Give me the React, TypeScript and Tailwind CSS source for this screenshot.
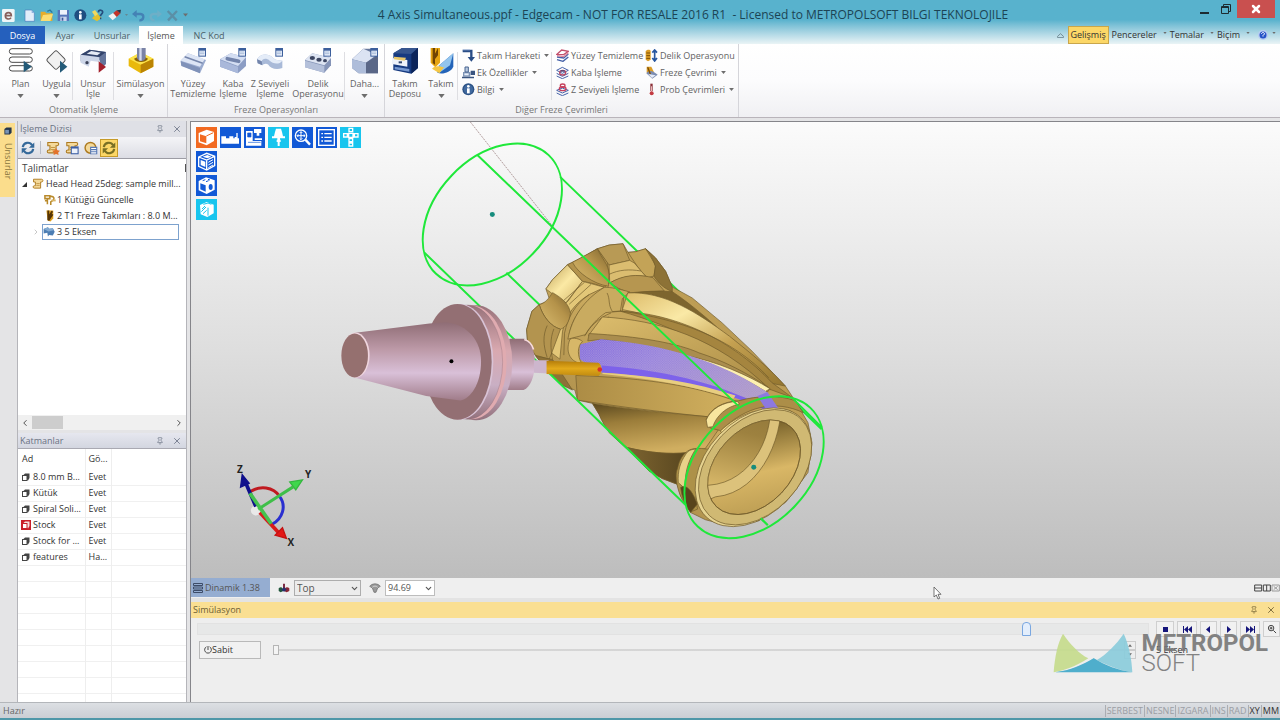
import type { ReactNode } from 'react'
import { useState } from 'react'
import { clsx } from 'clsx'
import { X, Pin, ChevronLeft, ChevronRight, ChevronDown } from 'lucide-react'

interface BigButtonProps {
  label: string
  second?: string
  arrow?: boolean
  width: string
  icon: ReactNode
}

function Big({ children }: { children: ReactNode }) {
  return (
    <svg viewBox="0 0 78 78" className="h-[26px] w-[26px] shrink-0" aria-hidden="true">
      {children}
    </svg>
  )
}

function Small({ children, size = 'h-[13px] w-[13px]' }: { children: ReactNode; size?: string }) {
  return (
    <svg viewBox="0 0 39 39" className={clsx(size, 'shrink-0')} aria-hidden="true">
      {children}
    </svg>
  )
}

function Caret({ className }: { className?: string }) {
  return (
    <svg viewBox="0 0 8 5" className={clsx('shrink-0 fill-[#6d6d6d]', className)} aria-hidden="true">
      <path d="M0 0h8L4 5z" />
    </svg>
  )
}

function BigButton({ label, second, arrow, width, icon }: BigButtonProps) {
  return (
    <button type="button" className={clsx('flex flex-col items-center pt-1 whitespace-nowrap', width)}>
      {icon}
      <span className="mt-[5px] leading-[10px]">{label}</span>
      {second && <span className="leading-[10px]">{second}</span>}
      {arrow && <Caret className="mt-[5px] h-1 w-[7px]" />}
    </button>
  )
}

function SmallButton({ label, icon, arrow }: { label: string; icon: ReactNode; arrow?: boolean }) {
  return (
    <button type="button" className="flex h-[17px] items-center gap-[2px] whitespace-nowrap">
      {icon}
      <span>{label}</span>
      {arrow && <Caret className="ml-[2px] h-[3px] w-[5px]" />}
    </button>
  )
}

function Separator() {
  return <div className="mt-2 h-12 w-px shrink-0 bg-[#dedee2]" />
}

function Group({ title, children }: { title: string; children: ReactNode }) {
  return (
    <section className="flex flex-col border-r border-[#d5d5da]">
      <div className="flex h-[59px]">{children}</div>
      <h2 className="text-center leading-[13px] text-[#777]">{title}</h2>
    </section>
  )
}

// little "document" badge shared by the milling icons
function Badge({ x = 60, y = 0 }: { x?: number; y?: number }) {
  return (
    <g transform={`translate(${x} ${y})`}>
      <rect x="0" y="0" width="23" height="26" fill="#3c5f9c" />
      <path d="M3 8h17v15H3z" fill="#e8effa" />
      <path d="M5 12h13M5 17h13" stroke="#8ea6cc" strokeWidth="2" />
    </g>
  )
}

/* ---------- ribbon icons ---------- */

const planIcon = (
  <Big>
    <g fill="#fff" stroke="#4b4b4b" strokeWidth="3">
      <rect x="4" y="2" width="69" height="16" rx="8" />
      <rect x="4" y="27" width="69" height="16" rx="8" />
      <rect x="4" y="53" width="69" height="16" rx="8" />
    </g>
    <path d="M47 38v35l24-17z" fill="#235a78" />
  </Big>
)

const applyIcon = (
  <Big>
    <rect x="15" y="15" width="42" height="42" rx="6" transform="rotate(45 36 36)" fill="#f1f1f1" stroke="#555" strokeWidth="3" />
    <path d="M48 38v36l22-18z" fill="#235a78" />
  </Big>
)

const featureIcon = (
  <Big>
    <path d="M2 20 28 5l50 7v36l-12 12-8-24-30-2-8 18-18-12z" fill="#64759b" />
    <path d="m2 20 26-15 50 7-20 15z" fill="#33446b" />
    <path d="m20 17 14-8 28 5-10 8z" fill="#e6ebf5" />
    <path d="m2 20 56 8v14l-26-4-6 18L2 44z" fill="#cdd6e8" />
    <circle cx="21" cy="44" r="5" fill="#3b4258" />
    <path d="M56 40v34l22-17z" fill="#a3202c" />
  </Big>
)

const simIcon = (
  <Big>
    <path d="M2 32 38 14l38 18v24L38 76 2 54z" fill="#e9b90b" />
    <path d="m2 32 36 18 38-18-38-20z" fill="#fce34a" />
    <path d="m38 50 38-18v24L38 76z" fill="#bb8404" />
    <path d="M18 32c6 12 34 14 42 0L40 22z" fill="#876107" />
    <path d="M27 0h26v30c-4 12-22 12-26 0z" fill="#7a83a6" />
    <path d="M34 0h7v38h-7z" fill="#d5daec" />
  </Big>
)

const faceIcon = (
  <Big>
    <path d="M2 38 24 16l54 20-18 40L4 52z" fill="#9aabcf" />
    <path d="m2 38 22-22 50 18-14 22z" fill="#dde5f5" />
    <path d="m14 26 54 20" stroke="#7787ac" strokeWidth="5" />
    <path d="m2 40 58 20v16L4 54z" fill="#8092b9" />
    <Badge x={55} />
  </Big>
)

const roughIcon = (
  <Big>
    <path d="m0 34 32-18 46 12v26L54 76 0 56z" fill="#8c9dc4" />
    <path d="m0 34 32-18 46 12-24 26z" fill="#d4def2" />
    <path d="m22 32 34 8" stroke="#7384ab" strokeWidth="11" strokeLinecap="round" />
    <path d="m0 36 54 20v20L0 56z" fill="#a9b8da" />
    <Badge x={55} />
  </Big>
)

const zLevelIcon = (
  <Big>
    <path d="M0 34c8-16 32-20 46-6 6 6 12 10 30 10v22c-20 8-36 0-42-10-6-6-16-2-18 2L2 46z" fill="#a9bad8" />
    <path d="M0 34c8-16 32-20 46-6 6 6 12 10 30 10-10 14-30 8-38 0-8-8-22-8-24 2z" fill="#e4ecf8" />
    <path d="M2 46 0 34l14 6 2 12z" fill="#7385ab" />
    <Badge x={55} />
  </Big>
)

const holeIcon = (
  <Big>
    <path d="m0 36 22-20 56 14v22L58 74 0 58z" fill="#8695b8" />
    <path d="m0 36 22-20 56 14-20 22z" fill="#dde4f2" />
    <ellipse cx="22" cy="30" rx="8" ry="6" fill="#3d4763" />
    <ellipse cx="42" cy="35" rx="8" ry="6" fill="#3d4763" />
    <ellipse cx="60" cy="38" rx="6" ry="5" fill="#3d4763" />
    <path d="m0 38 58 16v20L0 58z" fill="#b4c0da" />
    <Badge x={55} />
  </Big>
)

const moreIcon = (
  <Big>
    <path d="M0 34 34 2h44v74H20L0 60z" fill="#67789c" />
    <path d="M0 34 34 2l40 18-32 24z" fill="#dbe3f3" />
    <path d="m0 34 42 10v32H20L0 60z" fill="#aebdda" />
    <path d="m42 44 36-22v54H42z" fill="#5a6787" />
    <Badge x={55} />
  </Big>
)

const storeIcon = (
  <Big>
    <path d="M4 16 30 0h48v60L58 77 4 66z" fill="#163a80" />
    <path d="M4 16 30 0h48L58 18z" fill="#35558e" />
    <path d="m58 18 20-18v60L58 77z" fill="#0c2459" />
    <path d="m0 30 46 6v20L0 48z" fill="#eef2fa" />
    <path d="m6 26 36 3-4 9-32-4z" fill="#e9c869" />
    <path d="m8 56 44 7v8L8 64z" fill="#7698d0" />
    <path d="M20 40h10v6H20z" fill="#34476f" />
  </Big>
)

const toolIcon = (
  <Big>
    <path d="M8 0h28v44L22 58 8 44z" fill="#e6a512" />
    <path d="M14 0h7v50l-7-5zM30 0v22L14 42V30z" fill="#6f4303" />
    <path d="m34 52 42-36v40c-8 18-34 24-48 18z" fill="#2464b9" />
    <path d="m34 52 42-36-10 36-32 22z" fill="#93c5ee" />
    <path d="M12 62c10-10 20-8 36-4L34 76z" fill="#f5c744" />
  </Big>
)

const moveIcon = (
  <Small>
    <path d="M2 6h26v22" fill="none" stroke="#2a4d86" strokeWidth="7" />
    <path d="M17 24h22L28 38z" fill="#2a4d86" />
    <path d="M2 3h22" stroke="#8aa8d4" strokeWidth="2" />
  </Small>
)

const extrasIcon = (
  <Small>
    <path d="M3 18h22v14H3z" fill="#7d93b5" />
    <path d="M9 3h10v15H9z" fill="#b9c9e0" stroke="#496590" strokeWidth="3" />
    <path d="M0 32h36v5H0zM26 14h13v13H26z" fill="#3b5580" />
    <path d="M7 22h13v6H7z" fill="#e8effa" />
  </Small>
)

const infoIcon = (
  <Small>
    <circle cx="19" cy="19" r="18" fill="#2c5285" />
    <circle cx="19" cy="19" r="14" fill="#41699f" />
    <path d="M15 16h8v15h-8z" fill="#fff" />
    <circle cx="19" cy="10" r="4" fill="#fff" />
  </Small>
)

const faceSmall = (
  <Small>
    <g fill="none" strokeWidth="4">
      <path d="m3 16 14-13 20 4-14 10z" stroke="#c3506c" />
      <path d="m3 24 20 3 14-12M3 32l18 5 16-13" stroke="#4561a8" />
      <path d="m3 20 20 3 14-12" stroke="#df8398" />
    </g>
  </Small>
)

const roughSmall = (
  <Small>
    <g fill="none" stroke="#4561a8" strokeWidth="3">
      <path d="m2 13 17-9 18 9-18 9zM2 22l17 9 18-9M2 30l17 8 18-8" />
    </g>
    <ellipse cx="20" cy="20" rx="9" ry="7" fill="none" stroke="#b74663" strokeWidth="4" />
    <path d="M14 15h12" stroke="#3a467c" strokeWidth="4" />
  </Small>
)

const zSmall = (
  <Small>
    <g fill="none" stroke="#4561a8" strokeWidth="3">
      <path d="m2 22 17-7 18 7-18 8zM2 30l17 8 18-8" />
    </g>
    <g fill="none" stroke="#c6405d" strokeWidth="4">
      <ellipse cx="20" cy="8" rx="7" ry="5" />
      <ellipse cx="20" cy="17" rx="10" ry="6" />
    </g>
  </Small>
)

const holeSmall = (
  <Small>
    <path d="M2 6c6-6 14-4 15 0v26l-8 5-7-5z" fill="#dc9d25" />
    <path d="M4 12h11M4 20h11M4 28h11" stroke="#7a4c05" strokeWidth="3" />
    <path d="M29 3v32M22 11l7-8 7 8M22 27l7 9 7-9" fill="none" stroke="#2857a0" strokeWidth="5" />
  </Small>
)

const millSmall = (
  <Small>
    <path d="M5 2h14l8 17-8 12L5 20z" fill="#dc9d25" />
    <path d="M4 22c8-12 20-8 34 4L22 38z" fill="#7c8db2" />
    <path d="m10 24 22 4-11 8z" fill="#e5ebf7" />
    <path d="m8 4 8 20" stroke="#7a4c05" strokeWidth="4" />
  </Small>
)

const probeSmall = (
  <Small>
    <path d="M16 2h7v22h-7z" fill="#8b2f36" />
    <path d="M18 10h3v16h-3z" fill="#e9b6b7" />
    <circle cx="20" cy="31" r="6" fill="#c33b42" />
  </Small>
)

/* ---------- title bar ---------- */

function QuickAccess() {
  const items: { name: string; art: ReactNode }[] = [
    {
      name: 'Edgecam',
      art: (
        <>
          <rect width="38" height="39" rx="4" fill="#eef6f8" />
          <path d="M10 20h18c0-12-17-12-18 0 0 12 14 12 17 6" fill="none" stroke="#87605c" strokeWidth="5" />
        </>
      ),
    },
    {
      name: 'Yeni',
      art: (
        <>
          <path d="M6 3h20l8 9v25H6z" fill="#e2edfa" stroke="#4d7dbd" strokeWidth="2" />
          <path d="M26 3v9h8z" fill="#8fb3e0" />
        </>
      ),
    },
    {
      name: 'Aç',
      art: (
        <>
          <path d="M2 8h13l4 5h18v23H2z" fill="#e5ad2c" />
          <path d="m9 18 30-3-8 21H2z" fill="#fbdd73" />
          <path d="m22 7 8-4 7 8" fill="none" stroke="#2a7a9c" strokeWidth="4" />
        </>
      ),
    },
    {
      name: 'Kaydet',
      art: (
        <>
          <path d="M2 3h34v33H2z" fill="#5676ba" />
          <path d="M9 3h21v14H9z" fill="#edf2fb" />
          <path d="M10 23h19v13H10z" fill="#c7d4ec" />
          <path d="M14 26h5v9h-5z" fill="#3a569a" />
        </>
      ),
    },
    {
      name: 'Bilgi',
      art: (
        <>
          <circle cx="19" cy="19" r="18" fill="#1f4f80" />
          <path d="M15 16h8v15h-8z" fill="#fff" />
          <circle cx="19" cy="10" r="4" fill="#fff" />
        </>
      ),
    },
    {
      name: 'Yardım',
      art: (
        <>
          <path d="m3 28 15-15 14 14-14 10z" fill="#e2c12e" />
          <path d="m3 8 9-5 9 12-9 7z" fill="#efd960" />
          <path d="M22 10c1-9 14-8 13 0-1 5-7 6-7 12M27 28h4" fill="none" stroke="#254d7d" strokeWidth="5" />
        </>
      ),
    },
    {
      name: 'Temizle',
      art: (
        <>
          <path d="m1 21 14-9 13 10-14 12z" fill="#f2f2f2" />
          <path d="M16 12 26 4l12 8-12 12z" fill="#c33329" />
          <path d="m26 4 13-2-2 11z" fill="#2f3446" />
        </>
      ),
    },
  ]
  return (
    <div className="flex w-48 shrink-0 items-center gap-1 pt-[2px] pl-[2px]">
      {items.map((item, index) => (
        <button key={item.name} type="button" aria-label={item.name} className={clsx(index === 1 && 'ml-1')}>
          <Small>{item.art}</Small>
        </button>
      ))}
      <Caret className="h-[2px] w-[3px] opacity-60" />
      <button type="button" aria-label="Geri al">
        <Small>
          <path d="M8 15h18c12 2 10 20-4 19" fill="none" stroke="#4482b5" strokeWidth="7" />
          <path d="M14 3v23L0 15z" fill="#4482b5" />
        </Small>
      </button>
      <button type="button" aria-label="Yinele">
        <Small>
          <path d="M31 15H13C1 17 3 35 17 34" fill="none" stroke="#6eafc7" strokeWidth="7" />
          <path d="M25 3v23l14-11z" fill="#6eafc7" />
        </Small>
      </button>
      <button type="button" aria-label="Sil">
        <Small>
          <path d="m5 6 27 28M33 6 6 34" stroke="#5b8fa6" strokeWidth="7" />
        </Small>
      </button>
      <Caret className="h-1 w-[5px]" />
    </div>
  )
}

function TitleBar() {
  return (
    <div className="flex h-7 items-stretch">
      <QuickAccess />
      <h1 className="min-w-0 flex-1 truncate pt-[6px] text-center text-[12px] leading-[18px] whitespace-pre text-[#1c4454]">
        {'4 Axis Simultaneous.ppf - Edgecam - NOT FOR RESALE 2016 R1  - Licensed to METROPOLSOFT BILGI TEKNOLOJILE'}
      </h1>
      <div className="flex w-[86px] shrink-0 items-start justify-end pr-[5px]">
        <button type="button" aria-label="Küçült" className="flex h-[14px] w-[22px] items-end justify-center">
          <span className="h-[2px] w-[9px] bg-[#1d2b31]" />
        </button>
        <button type="button" aria-label="Önceki boyut" className="flex h-[14px] w-[22px] items-end justify-center">
          <svg viewBox="0 0 10 10" className="h-[10px] w-[10px]" fill="none" stroke="#1d2b31">
            <path d="M2.5 2V.5h7v7H8" />
            <path d="M.5 2.500h7v7h-7zM.5 3.500h7" />
          </svg>
        </button>
        <button type="button" aria-label="Kapat" className="flex h-[18px] w-[39px] items-center justify-center bg-[#c9504f] text-white">
          <X className="h-3 w-3" strokeWidth={5} />
        </button>
      </div>
    </div>
  )
}

const tabs = [
  { label: 'Dosya', width: 'w-[45px]' },
  { label: 'Ayar', width: 'w-10' },
  { label: 'Unsurlar', width: 'w-[54px]' },
  { label: 'İşleme', width: 'w-11' },
  { label: 'NC Kod', width: 'w-[52px]' },
]

function TabRow() {
  const [active, setActive] = useState('İşleme')
  return (
    <div className="flex h-4 items-end justify-between">
      <nav className="flex h-[18px] items-stretch">
        {tabs.map((tab) => (
          <button
            key={tab.label}
            type="button"
            onClick={() => setActive(tab.label)}
            className={clsx(
              'text-center leading-[19px]',
              tab.width,
              tab.label === 'Dosya' && 'bg-[#2560bd] text-white',
              tab.label === active && 'bg-white text-[#555]',
              tab.label !== 'Dosya' && tab.label !== active && 'text-[#4a5f68]'
            )}
          >
            {tab.label}
          </button>
        ))}
      </nav>
      <div className="flex h-[18px] items-center text-[#333]">
        <svg viewBox="0 0 8 6" className="mr-1 h-[5px] w-[7px]" fill="none" stroke="#66808a" aria-hidden="true">
          <path d="M.5 4 4 .8 7.500 4v1.500h-7z" />
        </svg>
        <button type="button" className="h-[18px] w-[41px] border border-[#c9a64b] bg-[#fcd767] text-center">Gelişmiş</button>
        {['Pencereler', 'Temalar', 'Biçim'].map((name) => (
          <button key={name} type="button" className="flex items-center gap-[6px] pl-[3px]">
            {name}
            <Caret className="mb-1 h-[2px] w-1" />
          </button>
        ))}
        <button type="button" aria-label="Yardım" className="ml-2 flex items-center gap-1 pr-1">
          <svg viewBox="0 0 10 10" className="h-[10px] w-[10px]">
            <circle cx="5" cy="5" r="5" fill="#b8ccf3" />
            <circle cx="5" cy="5" r="3.500" fill="#2754c8" />
            <path d="M3.500 4c0-2 3-2 3 0L5 5.500v1" fill="none" stroke="#fff" />
          </svg>
          <Caret className="mb-1 h-[2px] w-1" />
        </button>
      </div>
    </div>
  )
}

function Ribbon() {
  return (
    <div className="flex h-[74px] shrink-0 border-b border-[#b9b4ba] bg-linear-to-b from-white via-[#fcfcfd] to-[#f0f0f3] text-[#636363]">
      <Group title="Otomatik İşleme">
        <BigButton width="w-[41px]" label="Plan" arrow icon={planIcon} />
        <BigButton width="w-[31px]" label="Uygula" arrow icon={applyIcon} />
        <Separator />
        <BigButton width="w-10" label="Unsur" second="İşle" icon={featureIcon} />
        <Separator />
        <BigButton width="w-[53px]" label="Simülasyon" arrow icon={simIcon} />
      </Group>
      <Group title="Freze Operasyonları">
        <BigButton width="w-[50px]" label="Yüzey" second="Temizleme" icon={faceIcon} />
        <BigButton width="w-[30px]" label="Kaba" second="İşleme" icon={roughIcon} />
        <BigButton width="w-[44px]" label="Z Seviyeli" second="İşleme" icon={zLevelIcon} />
        <BigButton width="w-[52px]" label="Delik" second="Operasyonu" icon={holeIcon} />
        <Separator />
        <BigButton width="w-[39px]" label="Daha..." arrow icon={moreIcon} />
      </Group>
      <Group title="Diğer Freze Çevrimleri">
        <BigButton width="w-10" label="Takım" second="Deposu" icon={storeIcon} />
        <BigButton width="w-8" label="Takım" arrow icon={toolIcon} />
        <Separator />
        <div className="w-[93px] pt-[3px] pl-1">
          <SmallButton label="Takım Hareketi" arrow icon={moveIcon} />
          <SmallButton label="Ek Özellikler" arrow icon={extrasIcon} />
          <SmallButton label="Bilgi" arrow icon={infoIcon} />
        </div>
        <Separator />
        <div className="w-[93px] pt-[3px] pl-1">
          <SmallButton label="Yüzey Temizleme" icon={faceSmall} />
          <SmallButton label="Kaba İşleme" icon={roughSmall} />
          <SmallButton label="Z Seviyeli İşleme" icon={zSmall} />
        </div>
        <div className="w-[93px] pt-[3px]">
          <SmallButton label="Delik Operasyonu" icon={holeSmall} />
          <SmallButton label="Freze Çevrimi" arrow icon={millSmall} />
          <SmallButton label="Prob Çevrimleri" arrow icon={probeSmall} />
        </div>
      </Group>
    </div>
  )
}

/* ---------- left panels ---------- */

function PanelTitle({ title, className }: { title: string; className?: string }) {
  return (
    <header className={clsx('flex shrink-0 items-center pl-[2px]', className)}>
      <h2 className="flex-1">{title}</h2>
      <button type="button" aria-label="Sabitle" className="mr-2">
        <Pin className="h-2 w-2" />
      </button>
      <button type="button" aria-label="Kapat" className="mr-1">
        <X className="h-[10px] w-[10px]" strokeWidth={2} />
      </button>
    </header>
  )
}

const refreshArt = (color: string) => (
  <>
    <path d="M5 17c2-14 20-16 26-5M34 22c-2 14-20 16-26 5" fill="none" stroke={color} strokeWidth="6" />
    <path d="M37 4v15H22zM2 35V20h15z" fill={color} />
  </>
)

const scrollArt = (
  <>
    <path d="M5 4h26c6 0 6 9 0 9h-3v20H8c-6 0-6-8 0-8h3V13H5z" fill="#f4d99a" stroke="#ad7a20" strokeWidth="3" />
    <path d="M14 18h11M14 24h11" stroke="#ad7a20" strokeWidth="2" />
  </>
)

function SequencePanel() {
  return (
    <section className="flex h-[309px] shrink-0 flex-col bg-white">
      <PanelTitle title="İşleme Dizisi" className="h-4 bg-[#dfe0e6] text-[#6a7284]" />
      <div className="flex h-[21px] shrink-0 items-center bg-linear-to-b from-[#f4f4f7] to-[#dcdde4] pl-[3px]">
        <button type="button" aria-label="Yenile">
          <Small size="h-[14px] w-[14px]">{refreshArt('#35699a')}</Small>
        </button>
        <div className="mx-[5px] h-[13px] w-px bg-[#b9bcc6]" />
        <div className="flex items-center gap-[5px]">
          <button type="button" aria-label="Dizi ekle">
            <Small size="h-[14px] w-[14px]">
              {scrollArt}
              <path d="m28 20 4 6 7 1-5 5 1 7-7-3-7 3 1-7-5-5 7-1z" fill="#e2722b" />
            </Small>
          </button>
          <button type="button" aria-label="Dizi özellikleri">
            <Small size="h-[14px] w-[14px]">
              {scrollArt}
              <path d="M16 15h22v22H16z" fill="#3c5fa5" />
              <path d="M19 21h16v13H19z" fill="#edf2fb" />
            </Small>
          </button>
          <button type="button" aria-label="Zaman">
            <Small size="h-[14px] w-[14px]">
              <circle cx="18" cy="19" r="15" fill="#f4d99a" stroke="#ad7a20" strokeWidth="4" />
              <path d="M17 16h20v21H17z" fill="#5678b4" />
              <path d="M20 21h14M20 27h14M20 33h14" stroke="#fff" strokeWidth="3" />
            </Small>
          </button>
        </div>
        <button type="button" aria-label="Otomatik yenile" className="ml-[2px] flex h-[18px] w-[18px] items-center justify-center border border-[#c69b2a] bg-[#fcd766]">
          <Small size="h-[14px] w-[14px]">{refreshArt('#797024')}</Small>
        </button>
      </div>
      <div className="flex h-[18px] shrink-0 items-center justify-between border-t border-[#9c9ca4] pl-1 text-[10px]">
        <span>Talimatlar</span>
        <span className="h-2 w-px bg-[#555]" />
      </div>
      <ul className="flex-1 whitespace-nowrap text-[#333]">
        <li className="flex h-4 items-center pl-1">
          <svg viewBox="0 0 5 5" className="mr-[5px] h-[5px] w-[5px]">
            <path d="M5 0v5H0z" fill="#333" />
          </svg>
          <Small size="h-3 w-3">{scrollArt}</Small>
          <span className="ml-[2px]">Head Head 25deg: sample mill...</span>
        </li>
        <li className="flex h-4 items-center gap-px pl-[26px]">
          <Small size="h-3 w-3">
            <path d="M3 6h16v9H3zM11 15v18M3 22h10M20 8c14-2 14 8 10 12l-8 6v10" fill="none" stroke="#b98a2b" strokeWidth="5" />
            <path d="M24 18h14v6H24z" fill="#d9b565" />
          </Small>
          <span>1 Kütüğü Güncelle</span>
        </li>
        <li className="flex h-4 items-center gap-px pl-[26px]">
          <Small size="h-3 w-3">
            <path d="M8 2h22v26l-9 9-9-3z" fill="#dd9e1c" />
            <path d="M14 2v22l13-20M14 34l14-20" fill="none" stroke="#553405" strokeWidth="6" />
          </Small>
          <span>2 T1 Freze Takımları : 8.0 M...</span>
        </li>
        <li className="flex h-4 items-center pr-[7px] pl-[14px]">
          <ChevronRight className="mr-[2px] h-[8px] w-[8px] text-[#aaa]" />
          <span className="flex h-4 flex-1 items-center gap-[2px] border border-[#7da2ce]">
            <Small size="h-3 w-3">
              <path d="M2 10 16 4l4 5 12-2 6 12-6 12-12-2-4 5L14 22 2 24z" fill="#4d7eb3" />
              <path d="m2 10 14-6 4 5 12-2 3 7-17 4z" fill="#83abd2" />
            </Small>
            3 5 Eksen
          </span>
        </li>
      </ul>
      <div className="flex h-[15px] shrink-0 items-center bg-[#f0f0f0] px-[2px]">
        <ChevronLeft className="h-[10px] w-[10px] text-[#333]" />
        <div className="ml-[2px] h-[13px] w-[31px] bg-[#cdcdcd]" />
        <ChevronRight className="ml-auto h-[10px] w-[10px] text-[#333]" />
      </div>
    </section>
  )
}

const layers = [
  { name: '8.0 mm B...', visible: 'Evet' },
  { name: 'Kütük', visible: 'Evet' },
  { name: 'Spiral Soli...', visible: 'Evet' },
  { name: 'Stock', visible: 'Evet', current: true },
  { name: 'Stock for ...', visible: 'Evet' },
  { name: 'features', visible: 'Ha...' },
]

function LayersPanel() {
  return (
    <section className="flex min-h-0 flex-1 flex-col bg-white">
      <PanelTitle title="Katmanlar" className="h-4 border-b border-[#a9a9b2] bg-linear-to-b from-[#e6e7ef] to-[#d3d6e0] text-[#6a7284]" />
      <div className="min-h-0 flex-1 overflow-hidden">
        <table className="w-full table-fixed border-collapse text-left text-[#333]">
          <colgroup>
            <col className="w-[67px]" />
            <col className="w-[26px]" />
            <col />
          </colgroup>
          <thead>
            <tr className="h-5">
              <th className="border-r border-[#eee] pl-[4px] font-normal">Ad</th>
              <th className="border-r border-[#eee] pl-[3px] font-normal">Gö...</th>
              <th className="font-normal" />
            </tr>
          </thead>
          <tbody>
            {layers.map((layer) => (
              <tr key={layer.name} className="h-4 border-b border-[#f0f0f0]">
                <td className="border-r border-[#eee] p-0 pl-[3px] whitespace-nowrap">
                  <span className="flex items-center gap-[2px]">
                    <svg viewBox="0 0 10 10" className={clsx('h-[10px] w-[10px] shrink-0', layer.current && 'bg-[#c9202b]')} aria-hidden="true">
                      <path d="M2 3.500 4 1.500h4.500V6L7 8.500z" fill={layer.current ? '#f6dede' : '#444'} />
                      <rect x="1.500" y="3.500" width="4.500" height="5" fill="#fff" stroke={layer.current ? '#c9202b' : '#444'} />
                    </svg>
                    {layer.name}
                  </span>
                </td>
                <td className="border-r border-[#eee] p-0 pl-[3px] whitespace-nowrap">{layer.visible}</td>
                <td />
              </tr>
            ))}
            {Array.from({ length: 9 }, (_, i) => (
              <tr key={i} className="h-4 border-b border-[#f0f0f0]">
                <td className="border-r border-[#eee]" />
                <td className="border-r border-[#eee]" />
                <td />
              </tr>
            ))}
          </tbody>
        </table>
      </div>
    </section>
  )
}

/* ---------- 3D view ---------- */

function Part() {
  return (
    <g transform="translate(520 230) scale(.33333)" stroke="#6f5a2a" strokeWidth="2" strokeLinejoin="round">
      {/* silhouette */}
      <path
        d="M22 300 38 245 60 225 92 212 80 178 100 150 145 105 188 85 235 57 270 46 312 42 327 68 350 66 380 57 410 85 440 125 460 172 520 205 610 280 700 365 800 470 830 515 868 580 880 640 868 730 800 820 720 875 630 890 560 872 515 850 485 800 475 765 430 748 390 725 330 665 270 610 240 555 220 522 175 512 167 482 125 465 90 430 50 380 25 340z"
        fill="url(#gold)"
      />
      {/* crown lobes */}
      <path d="M80 178 100 150 145 105 190 155 140 220 110 200z" fill="url(#lobe)" />
      <path d="m145 105 45-22 45-26 30 40 6 62-15 14c-35-14-50-14-66-18z" fill="#b3934c" />
      <path d="m235 57 35-11 42-4 20 50-62 14z" fill="#b89a55" />
      <path d="M235 57c14 32 34 46 35 78l-2 35c-46-8-92-40-108-72z" fill="url(#pocket)" />
      <path d="m327 68 23-2 30-9 30 50-5 32-18 5c-20-14-34-36-60-76z" fill="#c3a357" />
      <path d="m380 57 30 28 30 40 20 47v14c-26-10-42-26-55-46l4-30c-6-20-16-40-29-53z" fill="#8d7236" />
      <path d="m270 106 62-14 14 8 34 40c-40-4-70 0-108 20z" fill="#dbbd70" />
      <path d="M270 134c30-14 60-16 96-10" fill="none" />
      <path d="M272 160c40-24 80-28 130-16l34 40-104 6-34-14z" fill="#b69650" />
      <path d="m190 155 66 18-46 22c-40 24-70 60-80 110l-8 84-40-30c-10-60 20-110 64-144z" fill="#e3c778" />
      <path d="M210 195c-44 30-64 70-74 116l-2 66M228 202c-44 26-70 70-78 112M134 212l62-54M150 224l66-60M98 370c-14-60-8-80 10-92M80 350c-10-40 0-60 10-72" fill="none" />
      <path d="M60 225c18-4 30-20 40-36 28 16 50 34 54 62-4 24-12 42-30 48-30-8-54-40-64-74z" fill="url(#pocket)" />
      <path d="M22 300 38 245l22-20c10 34 34 66 64 74l-26 70-8 20-42-12-23-37z" fill="#b3944f" />
      <path d="M84 288c-14 30-12 60 0 96M104 298c-12 30-10 60-4 92" fill="none" />
      <path d="m50 380 50 10 60 92-35-17-35-35z" fill="#8d7137" />
      <path d="M256 173c20 0 40 4 76 14l-22 20-6 38-44 4c-24 16-50 44-60 66l-54 14c12-66 50-120 110-156z" fill="#c9ab60" />
      <path d="M264 190c10 20 2 34 16 56l30-2 4-40M270 262c-24 12-46 34-56 54M276 250c-40 16-66 44-80 70" fill="none" />

      {/* top flute */}
      <path d="M326 190c50-4 90-8 134-4 60 40 130 100 190 160-70-60-140-110-218-140z" fill="#7d652e" />
      <path d="M326 190c110-6 210 60 306 130 70 56 120 96 168 150l-40-8c-110-90-250-186-450-222z" fill="url(#fluteA)" />
      <path d="M304 245c160 6 330 80 456 215l60 44-66-24C640 380 470 290 304 245z" fill="#a5853f" />
      <path d="M250 262c170 10 340 60 504 218C590 396 390 326 208 318z" fill="url(#fluteB)" />
      <path d="M310 245c170 24 330 80 440 200" fill="none" />
      <path d="M210 312c150 8 270 30 330 58 70 22 150 62 214 108l-8 10c-150-80-340-144-500-158l-40 4z" fill="#aa8d4e" />
      <path d="M500 378c90 16 190 60 254 100l-14 8c-70-44-160-84-240-108z" fill="#fdf0b0" />

      {/* machined flank */}
      <path d="m182 345 64-16c150 14 330 46 500 160l34 50-42 2c-130-60-300-100-490-112l-66-40z" fill="url(#flank)" stroke="none" />
      <path d="m182 345 64-16c150 14 330 46 500 160l34 50-42 2c-130-60-300-100-490-112l-66-40z" fill="url(#mesh)" stroke="none" />
      <path d="M248 408c180 14 350 50 500 130l-10 3c-130-60-300-100-490-112z" fill="#7d62ea" stroke="none" />
      <path d="M152 330c10-8 30-2 38 6-16 14-16 44-2 66-30-2-52-30-36-72z" fill="#d7b768" />

      {/* lower flutes */}
      <path d="M170 438c220 8 360 32 484 78-40 6-70 26-88 46-120-12-270-30-391-50z" fill="url(#land)" />
      <path d="M250 430c150 8 280 30 400 68l-6 10c-130-40-260-62-394-74z" fill="#e8ce80" stroke="none" />
      <path d="M220 522c110 18 230 30 345 40l36 36-42 60-50 12c-60 6-120 0-184-15-40-26-70-60-85-100z" fill="url(#fluteC)" />
      <path d="M325 655c64 15 124 21 184 15-26 20-36 60-34 95l-45-17-40-23z" fill="url(#fluteD)" />
      <path d="M562 570c16-36 54-54 98-56 60-16 120-18 170 0l24 36C770 510 680 530 606 604l-32-8z" fill="#ac8e48" />
      <path d="M562 572c14-34 50-54 94-56l6 8c-40 8-70 36-80 68l-16 2z" fill="#f8e59e" />
      <path d="M604 606c60-58 130-76 210-62l10 8c-80-10-150 0-210 60z" fill="#f5de90" />
      <path d="M512 662c20-8 36-4 60-2-34 40-50 110-36 180l-20 8c-40-40-52-110-40-130 4-24 16-46 36-56z" fill="#ad9148" />
      <path d="M500 676c8-14 20-16 30-16-26 40-34 80-30 120l-22-20c-2-36 6-60 22-84z" fill="#e8d289" />
      <path d="M485 775c16-10 34 6 50 50l-20 25c-16-20-26-44-30-75z" fill="#58441c" />
      <path d="m742 540 38-2-34-50-30 12z" fill="#8d78e0" stroke="none" />

      {/* front ring and bore */}
      <ellipse cx="704" cy="714" rx="206" ry="142" transform="rotate(-46.500 704 714)" fill="#e6d390" />
      <ellipse cx="709" cy="714" rx="200" ry="138" transform="rotate(-46.500 709 714)" fill="#d0b973" />
      <ellipse cx="706" cy="714" rx="164" ry="113" transform="rotate(-46.500 706 714)" fill="url(#bore)" />
      <g clipPath="url(#boreClip)">
        <path d="M500 480h284c20 124-50 310-194 323l-90 37z" fill="#dcc27b" />
        <path d="M500 480h250c28 130-50 280-180 288l-70 10z" fill="url(#floor)" />
      </g>
      <ellipse cx="706" cy="714" rx="164" ry="113" transform="rotate(-46.500 706 714)" fill="none" />
    </g>
  )
}

function Holder() {
  return (
    <g transform="translate(330 290) scale(.33333)">
      <path d="M540 148h45c22 10 32 40 32 72 0 40-14 74-34 82h-50z" fill="url(#mauve)" />
      <path d="M585 150c14 4 24 16 28 30" fill="none" stroke="#f8dcdf" strokeWidth="5" />
      <path d="M614 212h44v40l-44-2z" fill="#cdb6cd" />
      <path d="M652 214 808 220c12 6 12 32 0 40l-156-6z" fill="url(#cutter)" />
      <circle cx="812" cy="240" r="7" fill="#d83227" />
      <ellipse cx="440" cy="220" rx="109" ry="173" fill="url(#flange)" />
      <ellipse cx="426" cy="219" rx="106" ry="171" fill="#e0abb0" />
      <ellipse cx="414" cy="218" rx="106" ry="172" fill="url(#flange)" stroke="#8c6a75" strokeWidth="1" />
      <ellipse cx="391" cy="217" rx="101" ry="174" fill="#d9c3d6" />
      <ellipse cx="384" cy="217" rx="103" ry="174" fill="#936f73" />
      <path d="M77 130 300 102l50-4c66 8 105 56 105 117 0 70-32 112-62 118l-103-13L77 265z" fill="url(#mauve)" />
      <ellipse cx="78" cy="197" rx="42" ry="68" fill="#f0d6df" />
      <ellipse cx="75" cy="198" rx="40" ry="66" fill="#95706f" />
      <circle cx="366" cy="215" r="6" fill="#000" />
    </g>
  )
}

function Triad() {
  return (
    <g transform="translate(0 410) scale(.33333)" fill="none">
      <path d="M750 248c30-20 70-16 90 14" stroke="#c01a20" strokeWidth="9" />
      <path d="M838 260c24 30 10 70-22 86" stroke="#2a2fd0" strokeWidth="9" />
      <circle cx="768" cy="304" r="15" fill="#e9e9e9" />
      <path d="m768 292-30-70" stroke="#10108c" strokeWidth="11" />
      <path d="m727 196 21 26-26 12z" fill="#10108c" stroke="#10108c" strokeWidth="4" />
      <path d="m775 300 105-67" stroke="#3fbf49" strokeWidth="9" />
      <path d="m908 212-38 6 18 24z" fill="#3fd84c" stroke="#34b83f" strokeWidth="4" />
      <path d="m780 310 56 60" stroke="#d91a1a" strokeWidth="11" />
      <path d="m860 388-34-10 22-22z" fill="#e31717" stroke="#c41212" strokeWidth="4" />
      <path d="m750 252 64 92" stroke="#45c24e" strokeWidth="11" />
      <g fill="#222" className="font-bold" fontSize="30">
        <text x="711" y="190">Z</text>
        <text x="916" y="206">Y</text>
        <text x="863" y="410">X</text>
      </g>
    </g>
  )
}

function Scene() {
  return (
    <svg viewBox="191 122 1089 457" preserveAspectRatio="xMinYMin meet" className="absolute inset-0 h-full w-full" role="img" aria-label="4 Axis Simultaneous">
      <defs>
        <linearGradient id="gold" x1="0" y1="1" x2="1" y2="0">
          <stop offset="0" stopColor="#8c7036" />
          <stop offset=".5" stopColor="#c9a95e" />
          <stop offset="1" stopColor="#a98945" />
        </linearGradient>
        <linearGradient id="lobe" x1="0" y1="0" x2="1" y2="1">
          <stop offset="0" stopColor="#bd9f58" />
          <stop offset=".5" stopColor="#fbe9a4" />
          <stop offset="1" stopColor="#d3b569" />
        </linearGradient>
        <linearGradient id="pocket" x1="0" y1="1" x2="1" y2="0">
          <stop offset="0" stopColor="#dcbf72" />
          <stop offset=".6" stopColor="#b5934a" />
          <stop offset="1" stopColor="#7d6430" />
        </linearGradient>
        <linearGradient id="fluteA" x1="0" y1="0" x2="1" y2="1">
          <stop offset="0" stopColor="#dcbb69" />
          <stop offset=".3" stopColor="#fae9a6" />
          <stop offset=".6" stopColor="#c5a151" />
          <stop offset="1" stopColor="#93752f" />
        </linearGradient>
        <linearGradient id="fluteB" x1="0" y1="0" x2="1" y2="1">
          <stop offset="0" stopColor="#dcbd6d" />
          <stop offset="1" stopColor="#a98a44" />
        </linearGradient>
        <linearGradient id="flank" x1="0" y1="0" x2="1" y2=".6">
          <stop offset="0" stopColor="#8069dc" />
          <stop offset=".4" stopColor="#9884dc" />
          <stop offset="1" stopColor="#b09cc4" />
        </linearGradient>
        <linearGradient id="land" x1="0" y1="0" x2="1" y2="0">
          <stop offset="0" stopColor="#ac8c45" />
          <stop offset="1" stopColor="#d2b15f" />
        </linearGradient>
        <linearGradient id="fluteC" x1="0" y1="0" x2=".3" y2="1">
          <stop offset="0" stopColor="#5a481f" />
          <stop offset=".4" stopColor="#9b7d3a" />
          <stop offset="1" stopColor="#d0ae60" />
        </linearGradient>
        <linearGradient id="fluteD" x1="0" y1="0" x2="1" y2="0">
          <stop offset="0" stopColor="#7d6430" />
          <stop offset="1" stopColor="#58461f" />
        </linearGradient>
        <linearGradient id="bore" x1="0" y1="1" x2="1" y2="0">
          <stop offset="0" stopColor="#b3954d" />
          <stop offset=".45" stopColor="#d9b766" />
          <stop offset=".8" stopColor="#80692f" />
          <stop offset="1" stopColor="#57461f" />
        </linearGradient>
        <linearGradient id="floor" x1=".6" y1="0" x2=".4" y2="1">
          <stop offset="0" stopColor="#8f7539" />
          <stop offset=".4" stopColor="#9d813f" />
          <stop offset="1" stopColor="#d8b869" />
        </linearGradient>
        <linearGradient id="mauve" x1="0" y1="0" x2="0" y2="1">
          <stop offset="0" stopColor="#8f6d75" />
          <stop offset=".35" stopColor="#bd9aa8" />
          <stop offset=".65" stopColor="#d9c0d8" />
          <stop offset="1" stopColor="#a07c89" />
        </linearGradient>
        <linearGradient id="flange" x1="0" y1="0" x2="0" y2="1">
          <stop offset="0" stopColor="#98727a" />
          <stop offset=".4" stopColor="#d9a9b0" />
          <stop offset=".7" stopColor="#c9afc4" />
          <stop offset="1" stopColor="#93717c" />
        </linearGradient>
        <linearGradient id="cutter" x1="0" y1="0" x2="0" y2="1">
          <stop offset="0" stopColor="#b57d0a" />
          <stop offset=".5" stopColor="#e2a91a" />
          <stop offset="1" stopColor="#c08a10" />
        </linearGradient>
        <clipPath id="boreClip">
          <ellipse cx="706" cy="714" rx="164" ry="113" transform="rotate(-46.500 706 714)" />
        </clipPath>
        <pattern id="mesh" width="7" height="7" patternUnits="userSpaceOnUse">
          <path d="m0 0 7 7M7 0 0 7" stroke="#b6a2e0" strokeWidth="1" />
        </pattern>
      </defs>

      {/* hidden side of the stock cylinder */}
      <g fill="none" stroke="#1fe83a" strokeWidth="2">
        <path d="m561 177 262 253M507 273l262 253" />
      </g>
      <path d="m471 122 82 104" stroke="#a08787" strokeWidth=".8" strokeDasharray="2 1" />
      <Part />
      <g fill="none" stroke="#1fe83a" strokeWidth="2">
        <ellipse cx="493" cy="214.700" rx="82" ry="56.500" transform="rotate(-46.500 493 214.700)" />
        <ellipse cx="755.300" cy="468" rx="82" ry="56.500" transform="rotate(-46.500 755.300 468)" />
        <path d="m478 155 262 252M425 253l262 253M762 519l7 7M795 400l28 28" />
      </g>
      <circle cx="493" cy="214.700" r="2.500" fill="#168c7d" />
      <circle cx="755" cy="468" r="2.500" fill="#168c7d" />
      <Holder />
      <Triad />
    </svg>
  )
}

const viewTools: { name: string; bg: string; art: ReactNode }[] = [
  {
    name: 'Katı görünüm',
    bg: 'bg-[#f26a21]',
    art: (
      <>
        <path d="m8 18 24-10 22 7v27L32 55 8 46z" fill="#fff" />
        <path d="m12 22 19 6v21l-19-6z" fill="#f26a21" />
        <path d="m31 27 21-10" stroke="#f26a21" strokeWidth="3" />
      </>
    ),
  },
  {
    name: 'Makine tablası',
    bg: 'bg-[#1259d6]',
    art: <path d="M4 28h14v6h10v-6h12v6h4v-4h5V18h4v16h4v16H4z" fill="#fff" />,
  },
  {
    name: 'Makine',
    bg: 'bg-[#1259d6]',
    art: (
      <>
        <path d="M6 12h20v30h26v14H6zM30 6h22v12h-6v8h-8v-8h-8zM32 34h22v5H32z" fill="#fff" />
        <path d="M11 18h10v12H11zM12 46h38" fill="#1259d6" stroke="#1259d6" strokeWidth="2" />
      </>
    ),
  },
  {
    name: 'Takım tutucu',
    bg: 'bg-[#18c5ee]',
    art: <path d="M24 5h15l3 10 3 13h6v6H36v4h2v7h-3v12h-6V45h-3v-7h2v-4H12v-6h6l3-13z" fill="#fff" />,
  },
  {
    name: 'Yakınlaştır',
    bg: 'bg-[#1259d6]',
    art: (
      <>
        <circle cx="27" cy="26" r="17" fill="none" stroke="#fff" strokeWidth="4" />
        <path d="M27 14v24M15 26h24M23 18l4-4 4 4M23 34l4 4 4-4M19 22l-4 4 4 4M35 22l4 4-4 4" fill="none" stroke="#fff" strokeWidth="3" />
        <path d="m40 38 14 15" stroke="#fff" strokeWidth="7" />
      </>
    ),
  },
  {
    name: 'Liste',
    bg: 'bg-[#1259d6]',
    art: (
      <>
        <rect x="8" y="8" width="47" height="47" fill="none" stroke="#fff" strokeWidth="4" />
        <path d="M16 20h5M16 31h5M16 42h5M25 20h22M25 31h22M25 42h22" stroke="#fff" strokeWidth="4" />
      </>
    ),
  },
  {
    name: 'Açınım',
    bg: 'bg-[#18c5ee]',
    art: (
      <path d="M27 4h11v10H27zM26 19h13v12H26zM11 20h11v10H11zM43 20h11v10H43zM27 35h11v9H27zM27 48h11v9H27z" fill="none" stroke="#fff" strokeWidth="4" />
    ),
  },
]

const sideTools: { name: string; bg: string; art: ReactNode }[] = [
  {
    name: 'Yüzeyler',
    bg: 'bg-[#1259d6]',
    art: (
      <>
        <path d="m8 18 24-11 24 9v28L32 57 8 46zM8 18l24 9 24-11M32 27v30" fill="none" stroke="#fff" strokeWidth="4" />
        <path d="m14 27 14 5v16l-14-6zM20 17l14-5 12 5-12 5z" fill="#fff" />
        <path d="m37 34 14-8M37 42l14-8M37 50l14-8" stroke="#fff" strokeWidth="3" />
      </>
    ),
  },
  {
    name: 'Delikler',
    bg: 'bg-[#1259d6]',
    art: (
      <>
        <path d="m8 18 22-11 26 9v28L32 57 8 46z" fill="#fff" />
        <path d="m13 25 16 6v19l-16-7z" fill="#1259d6" />
        <ellipse cx="44" cy="36" rx="6" ry="9" fill="#1259d6" />
        <path d="m20 17 8-3M30 20l8-3M36 13l6 2" stroke="#1259d6" strokeWidth="3" />
      </>
    ),
  },
  {
    name: 'Kenarlar',
    bg: 'bg-[#18c5ee]',
    art: (
      <>
        <path d="m12 18 20-9 21 8v26L34 54 14 46z" fill="#fff" />
        <path d="m16 38 14-14M18 30l9-9M21 44l11-10M36 26v24M22 16l14-4 10 4" fill="none" stroke="#18c5ee" strokeWidth="3" />
      </>
    ),
  },
]

function ToolTile({ name, bg, art }: { name: string; bg: string; art: ReactNode }) {
  return (
    <button type="button" aria-label={name} className={clsx('h-[21px] w-[21px]', bg)}>
      <svg viewBox="0 0 63 63" className="h-full w-full">
        {art}
      </svg>
    </button>
  )
}

function Viewport() {
  return (
    <div className="relative min-h-0 flex-1 overflow-hidden bg-linear-to-b from-[#fbfbfb] via-[#dedede] to-[#bdbdbd]">
      <Scene />
      <div className="relative flex flex-col gap-[3px] p-[5px]">
        <div className="flex gap-[3px]">
          {viewTools.map((tool) => (
            <ToolTile key={tool.name} {...tool} />
          ))}
        </div>
        {sideTools.map((tool) => (
          <ToolTile key={tool.name} {...tool} />
        ))}
      </div>
    </div>
  )
}

function ViewBar() {
  return (
    <div className="relative flex h-5 shrink-0 items-center bg-[#efefef] text-[#555]">
      <div className="flex h-[19px] w-[79px] items-center gap-[2px] self-start bg-[#95add1] pl-[2px]">
        <svg viewBox="0 0 10 10" className="h-[10px] w-[10px]" fill="none" stroke="#3d4c68" aria-hidden="true">
          <path d="M.5.500h9v2h-9zM.5 4h9v2h-9zM.5 7.500h9v2h-9z" />
        </svg>
        <span>Dinamik 1.38</span>
      </div>
      <svg viewBox="0 0 36 30" className="ml-2 h-[10px] w-3" aria-hidden="true">
        <path d="M15 2h6v16h-6z" fill="#7d2b43" />
        <path d="M2 16c8-8 14 0 14 8l-8 4-6-4z" fill="#21573c" />
        <path d="M34 16c-8-8-16 0-16 8l8 4 8-4z" fill="#872636" />
        <path d="m18 12 8 8-8 6-8-6z" fill="#273070" />
      </svg>
      <label className="relative ml-1 flex">
        <span className="sr-only">Görünüm</span>
        <select defaultValue="Top" className="h-4 w-[67px] appearance-none border border-[#adadad] bg-[#ececec] pl-[2px] text-[10px] leading-[14px]">
          <option>Top</option>
          <option>Front</option>
        </select>
        <ChevronDown className="pointer-events-none absolute top-1 right-[2px] h-[9px] w-[9px]" strokeWidth={3} />
      </label>
      <svg viewBox="0 0 36 30" className="ml-2 h-[10px] w-3" fill="#999" stroke="#666" strokeWidth="2" aria-hidden="true">
        <path d="M2 10c8-10 24-10 32 0l-8 5-5 13h-6l-5-13z" />
        <path d="M10 13c4-5 12-5 16 0" fill="none" stroke="#eee" />
      </svg>
      <label className="relative ml-1 flex">
        <span className="sr-only">Ölçek</span>
        <select defaultValue="94.69" className="h-4 w-[50px] appearance-none border border-[#bdbdbd] bg-white pl-[2px] leading-[14px]">
          <option>94.69</option>
          <option>100</option>
        </select>
        <ChevronDown className="pointer-events-none absolute top-1 right-[2px] h-[9px] w-[9px]" strokeWidth={3} />
      </label>
      <svg viewBox="0 0 78 24" className="ml-auto h-2 w-[26px]" fill="none" stroke="#444" strokeWidth="3" aria-hidden="true">
        <path d="M2 3h21v18H2zM2 12h21M28 3h21v18H28zM38 3v18" />
        <path d="M54 3h22v18H54zM59 7l12 10M71 7 59 17" stroke="#999" />
      </svg>
      {/* mouse pointer */}
      <svg viewBox="0 0 9 14" className="absolute top-2 left-[742px] h-[14px] w-[9px]" fill="#fff" stroke="#555" strokeWidth=".8" aria-hidden="true">
        <path d="M1 1v10l2.300-2 1.700 4 1.700-.7L5 8.300h3z" />
      </svg>
    </div>
  )
}

const playback = [
  { name: 'Durdur', width: 'w-[18px]', art: 'M3 3h5v5H3z' },
  { name: 'Başa dön', width: 'w-5', art: 'M1 2h1v7H1zM6 2v7L2 5.500zM10 2v7L6 5.500z' },
  { name: 'Geri', width: 'w-[17px]', art: 'M7 2v7L3 5.500z' },
  { name: 'İleri', width: 'w-[17px]', art: 'M4 2v7l4-3.500z' },
  { name: 'Sona git', width: 'w-5', art: 'M1 2v7l4-3.500zM5 2v7l4-3.500zM9 2h1v7H9z' },
]

function Logo() {
  return (
    <div className="pointer-events-none absolute top-[15px] right-3 flex gap-2 text-[#777] opacity-90">
      <svg viewBox="0 0 240 120" className="h-10 w-20" aria-hidden="true">
        <path d="M2 118C6 70 14 30 30 2c20 30 48 60 76 74-40 26-72 36-104 42z" fill="#c5dc8b" />
        <path d="M6 118c100-6 160-50 206-116 16 34 24 76 26 116-40-6-80-22-116-42-40 26-76 38-116 42z" fill="#8accdc" />
        <path d="M8 118c44-6 80-22 114-42 36 22 72 36 116 42z" fill="#3ea8c9" />
      </svg>
      <div className="font-['Roboto',sans-serif] text-[24px] leading-5">
        <div className="font-bold">METROPOL</div>
        <div className="font-light">SOFT</div>
      </div>
    </div>
  )
}

function SimulationPanel() {
  return (
    <section className="flex h-[100px] shrink-0 flex-col bg-[#eee]">
      <PanelTitle title="Simülasyon" className="h-4 bg-[#fadf92] text-[#6c5d32]" />
      <div className="relative flex-1 overflow-hidden">
        <div className="flex items-center gap-[7px] pt-[3px] pl-[6px]">
          <input
            type="range"
            aria-label="Simülasyon konumu"
            max={1000}
            defaultValue={876}
            className="h-3 min-w-0 flex-1 appearance-none border border-[#e2e2e2] bg-[#e7e8e8] [&::-webkit-slider-thumb]:h-[14px] [&::-webkit-slider-thumb]:w-[9px] [&::-webkit-slider-thumb]:appearance-none [&::-webkit-slider-thumb]:rounded-t-sm [&::-webkit-slider-thumb]:border [&::-webkit-slider-thumb]:border-[#7aa7e0] [&::-webkit-slider-thumb]:bg-[#e3eefc]"
          />
          <div className="flex gap-[3px]">
            {playback.map((item) => (
              <button key={item.name} type="button" aria-label={item.name} className={clsx('flex h-4 items-center justify-center border border-[#cfcfcf] bg-[#f1f1f1]', item.width)}>
                <svg viewBox="0 0 11 11" className="h-[11px] w-[11px] fill-[#14147a]">
                  <path d={item.art} />
                </svg>
              </button>
            ))}
            <button type="button" aria-label="Yakınlaştır" className="flex h-4 w-[17px] items-center justify-center border border-[#cfcfcf] bg-[#f1f1f1]">
              <svg viewBox="0 0 11 11" className="h-[10px] w-[10px]" fill="none" stroke="#333">
                <circle cx="4.500" cy="4.500" r="3" />
                <path d="M4.500 3v3M3 4.500h3M7 7l3 3" />
              </svg>
            </button>
          </div>
        </div>
        <div className="mt-1 flex items-center pl-2">
          <button type="button" className="flex h-[18px] w-[62px] items-center border border-[#b9b9b9] bg-[#f1f1f1] pl-1 text-[#333]">
            <svg viewBox="0 0 10 10" className="h-2 w-2" fill="none" stroke="#444" strokeWidth="1.200" aria-hidden="true">
              <path d="M3 1a4.200 4.200 0 1 0 4 0M5 0v5" />
            </svg>
            Sabit
          </button>
          <input
            type="range"
            aria-label="Hız"
            defaultValue={0}
            className="ml-3 h-3 min-w-0 flex-1 appearance-none bg-linear-to-b from-transparent from-40% via-[#c4c4c4] via-50% to-transparent to-60% [&::-webkit-slider-thumb]:h-[10px] [&::-webkit-slider-thumb]:w-[6px] [&::-webkit-slider-thumb]:appearance-none [&::-webkit-slider-thumb]:border [&::-webkit-slider-thumb]:border-[#b5b5b5] [&::-webkit-slider-thumb]:bg-[#f4f4f4]"
          />
          <div className="flex w-[156px] items-center">
            <div className="flex flex-col">
              <button type="button" aria-label="Artır" className="flex h-[9px] w-3 items-center justify-center border border-[#ccc]">
                <Caret className="h-[3px] w-1 rotate-180" />
              </button>
              <button type="button" aria-label="Azalt" className="flex h-[9px] w-3 items-center justify-center border border-[#ccc]">
                <Caret className="h-[3px] w-1" />
              </button>
            </div>
            <span className="ml-5 text-[#333]">5 Eksen</span>
          </div>
        </div>
        <Logo />
      </div>
    </section>
  )
}

function StatusBar() {
  return (
    <footer className="flex h-[18px] shrink-0 items-center border-t border-[#b3b6ba] border-b-2 border-b-[#4f97a8] bg-linear-to-b from-[#dcdfe3] to-[#cbced4] pl-[3px] text-[#666]">
      <span className="flex-1">Hazır</span>
      {['SERBEST', 'NESNE', 'IZGARA', 'INS', 'RAD', 'XY', 'MM'].map((mode) => (
        <span key={mode} className={clsx('border-l border-[#aaadb3] px-px', mode.length === 2 ? 'text-[#333]' : 'text-[#9b9ea4]')}>
          {mode}
        </span>
      ))}
    </footer>
  )
}

export default function App() {
  return (
    <div className="flex h-screen flex-col overflow-hidden bg-[#e4e4e6] font-['Open_Sans','Noto_Sans',sans-serif] text-[9px] leading-[12px] text-[#444]">
      <header className="shrink-0 bg-linear-to-b from-[#58b2cd] from-45% to-[#eaf4f6]">
        <TitleBar />
        <TabRow />
      </header>
      <Ribbon />
      <div className="flex min-h-0 flex-1 pt-[3px]">
        <aside className="w-[17px] shrink-0 pt-[2px]">
          <button type="button" className="flex h-[74px] w-[15px] flex-col items-center gap-2 bg-[#fbdd8c] pt-1 text-[#8a7640]">
            <Small size="h-2 w-2">
              <path d="M2 10 12 2h25v26L28 37H2z" fill="#24364c" />
              <path d="M6 14h18v18H6z" fill="#7893b5" />
            </Small>
            <span className="[writing-mode:vertical-rl]">Unsurlar</span>
          </button>
        </aside>
        <div className="flex w-[170px] shrink-0 flex-col gap-[3px] border-x border-[#b5b5ba]">
          <SequencePanel />
          <LayersPanel />
        </div>
        <main className="ml-[3px] flex min-w-0 flex-1 flex-col border-t border-l border-[#85858a]">
          <Viewport />
          <ViewBar />
          <div className="h-1 shrink-0 bg-[#e3e3e3]" />
          <SimulationPanel />
        </main>
      </div>
      <StatusBar />
    </div>
  )
}
